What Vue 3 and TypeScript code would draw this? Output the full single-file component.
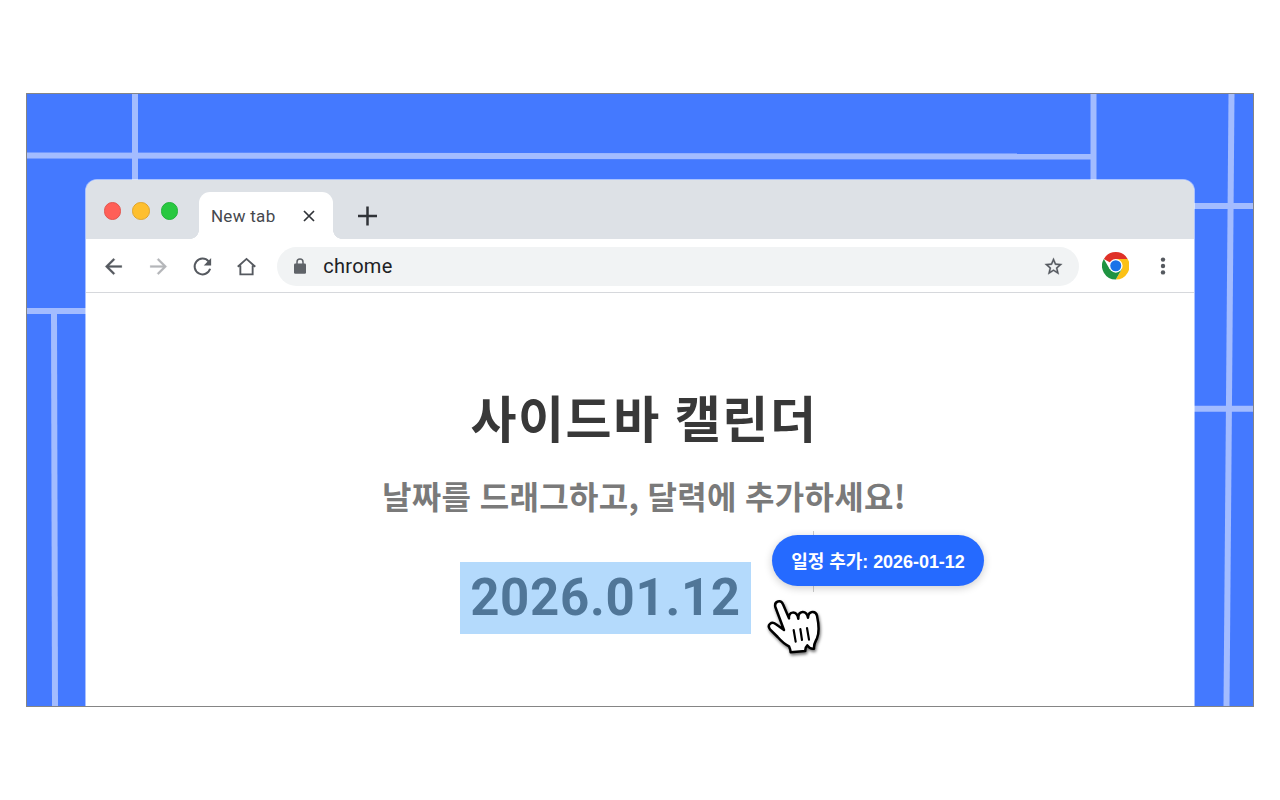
<script setup lang="ts">
const heading = '사이드바 캘린더'
const subheading = '날짜를 드래그하고, 달력에 추가하세요!'
const date = '2026.01.12'
const toast = '일정 추가: 2026-01-12'
const lights = ['red', 'yellow', 'green']
</script>

<template>
  <main class="page">
    <section class="banner">
      <svg class="lines" viewBox="0 0 1226 612" aria-hidden="true">
        <g fill="none" stroke="#a3bcff" stroke-width="6">
          <path d="M0 61.400L1067 62.600" />
          <path d="M108 0V100" />
          <path d="M1066.500 0V100" />
          <path d="M1204.500 0L1199.500 612" />
          <path d="M1160 112H1226" />
          <path d="M1160 314.800H1226" />
          <path d="M0 217H70" />
          <path d="M27 217L28 612" />
        </g>
      </svg>

      <div class="window">
        <header class="tabs">
          <div class="lights">
            <i v-for="c in lights" :key="c" :class="['light', c]"></i>
          </div>
          <div class="tab">
            <span class="tab-title">New tab</span>
            <svg class="close" viewBox="0 0 14 14"><path d="M2 2L12 12M12 2L2 12" stroke="#303338" stroke-width="1.700" /></svg>
          </div>
          <svg class="plus" viewBox="0 0 20 20"><path d="M10.500 .5V19.500M1 10H20" stroke="#303338" stroke-width="2.500" /></svg>
        </header>

        <nav class="toolbar">
          <svg class="ic" viewBox="0 0 24 24"><path fill="#55595f" stroke="#55595f" stroke-width=".2" d="M20 11H7.830l5.590-5.590L12 4l-8 8 8 8 1.410-1.410L7.830 13H20z" /></svg>
          <svg class="ic" viewBox="0 0 24 24"><path fill="#b4b6b9" stroke="#b4b6b9" stroke-width=".2" d="M12 4l-1.410 1.410L16.170 11H4v2h12.170l-5.580 5.590L12 20l8-8z" /></svg>
          <svg class="ic" viewBox="0 0 24 24">
            <path fill="none" stroke="#55595f" stroke-width="1.900" d="M19.300 14.200A7.600 7.600 0 1 1 17.800 7" />
            <path fill="#55595f" d="M20.300 3.900V11H13.200z" />
          </svg>
          <svg class="ic" viewBox="0 0 24 24"><path fill="none" stroke="#55595f" stroke-width="1.800" d="M3.600 12.200L12 4.700l8.400 7.500M6.100 11V19.500H17.900V11" /></svg>
          <div class="address">
            <svg class="lock" viewBox="0 0 12 16">
              <path fill="none" stroke="#5f6368" stroke-width="1.500" d="M3 6V4a3 3 0 0 1 6 0v2" />
              <rect x="0" y="5.500" width="12" height="10.300" rx="1.300" fill="#5f6368" />
            </svg>
            <span class="url">chrome</span>
            <svg class="star" viewBox="0 0 24 24"><path fill="#55595f" stroke="#55595f" stroke-width=".3" d="M22 9.240l-7.190-.62L12 2 9.190 8.630 2 9.240l5.460 4.730L5.820 21 12 17.270 18.180 21l-1.630-7.030zM12 15.400l-3.760 2.270 1-4.280-3.320-2.880 4.380-.38L12 6.100l1.710 4.040 4.380.38-3.320 2.880 1 4.280z" /></svg>
          </div>
          <svg class="chrome" viewBox="0 0 48 48">
            <path fill="#df3127" d="M24 24L3.215 12A24 24 0 0 1 44.785 12z" />
            <path fill="#fbc116" d="M24 24V12H44.785A24 24 0 0 1 24 48L34.392 30z" />
            <path fill="#1f9341" d="M3.215 12A24 24 0 0 0 24 48L34.392 30L24 24L13.608 30z" />
            <circle cx="24" cy="24" r="12" fill="#fff" />
            <circle cx="24" cy="24" r="9.600" fill="#1a73e8" />
          </svg>
          <svg class="dots" viewBox="0 0 6 18">
            <g fill="#55595f"><circle cx="3" cy="2.600" r="2.200" /><circle cx="3" cy="9" r="2.200" /><circle cx="3" cy="15.400" r="2.200" /></g>
          </svg>
        </nav>

        <div class="content">
          <h1>{{ heading }}</h1>
          <p class="sub">{{ subheading }}</p>
          <div class="date-row">
            <span class="date">{{ date }}</span>
            <div class="toast-wrap"><div class="toast">{{ toast }}</div></div>
            <svg class="hand" viewBox="15 219 180 180">
              <path fill="#fff" stroke="#000" stroke-width="7.500" stroke-linejoin="round" d="M46 246C42 228 63 223 69 238L87 280C84 259 110 255 115 281C114 256 139 254 144 278C145 257 167 256 171 272C177 300 179 320 171 340C166 350 161 356 162 371Q150 373 142 361Q135 367 136 378L92 382Q91 373 87 364C72 357 61 345 53 336L30 313C20 300 34 287 48 298L72 315Z" />
              <path fill="none" stroke="#000" stroke-width="6.500" stroke-linecap="round" d="M101 315L107 350M121 312L126 345M141 309L147 344" />
            </svg>
          </div>
        </div>
      </div>
    </section>
  </main>
</template>

<style>
body { margin: 0; background: #fff; }
</style>

<style scoped>
* { box-sizing: border-box; }
.page { width: 1280px; height: 800px; padding: 93px 26px; overflow: hidden; }
.banner { position: relative; width: 1228px; height: 614px; border: 1px solid #858585; background: #4479ff; padding: 85px 58px 0; overflow: hidden; }
.lines { position: absolute; left: 0; top: 0; width: 1226px; height: 612px; }
.window { position: relative; width: 1110px; height: 528px; background: #fff; background-clip: padding-box; border: 1px solid rgba(255, 255, 255, .55); border-bottom: 0; border-radius: 12px 12px 0 0; }
.tabs { height: 59px; display: flex; background: #dde1e6; border-radius: 11px 11px 0 0; }
.lights { display: flex; gap: 11px; padding: 22px 0 0 17.700px; width: 113.400px; }
.light { width: 17.500px; height: 17.500px; border-radius: 50%; flex: none; }
.red { background: #ff5f57; border: 1px solid #e2544d; }
.yellow { background: #febf2e; border: 1px solid #e0a52c; }
.green { background: #28c840; border: 1px solid #22b33a; }
.tab { position: relative; width: 134px; margin-top: 12px; border-radius: 11px 11px 0 0; background: #fff; display: flex; align-items: center; padding: 1px 0 0 11.500px; }
.tab::before, .tab::after { content: ''; position: absolute; bottom: 0; width: 9px; height: 9px; }
.tab::before { left: -9px; background: radial-gradient(circle at 0 0, transparent 8.600px, #fff 9.200px); }
.tab::after { right: -9px; background: radial-gradient(circle at 100% 0, transparent 8.600px, #fff 9.200px); }
.tab-title { font: 400 17px/24px Roboto, sans-serif; letter-spacing: 0.3px; color: #45484d; width: 91.500px; white-space: nowrap; }
.close { width: 14px; height: 14px; }
.plus { width: 20px; height: 20px; margin: 26px 0 0 24px; }
.toolbar { height: 54px; border-bottom: 1px solid #d6d8dc; display: flex; align-items: center; padding: 1px 0 0 15.300px; }
.ic { width: 25px; height: 25px; margin-right: 19.300px; flex: none; }
.address { width: 802px; height: 39px; margin-left: -1.600px; border-radius: 20px; background: #f1f3f4; display: flex; align-items: center; padding: 0 15px 0 17.500px; flex: none; }
.lock { width: 12px; height: 16px; }
.url { flex: 1; margin-left: 16.800px; font: 400 20px/28px Roboto, sans-serif; letter-spacing: 0.3px; color: #202124; }
.star { width: 21px; height: 21px; }
.chrome { width: 27.500px; height: 27.500px; margin-left: 23px; }
.dots { width: 6px; height: 18px; margin-left: 30.500px; }
.content { display: flex; flex-direction: column; align-items: center; }
h1 { margin: 88px 0 0 8px; font: 700 50px/70px "Noto Sans CJK KR", sans-serif; letter-spacing: 1.6px; word-spacing: 1px; color: #383838; white-space: nowrap; }
.sub { margin: 21px 0 0 8px; font: 700 32px/46px "Noto Sans CJK KR", sans-serif; letter-spacing: 0.3px; word-spacing: 0.8px; color: #7a7a7a; white-space: nowrap; }
.date-row { position: relative; align-self: stretch; margin-top: 44px; padding-left: 374px; display: flex; }
.date { width: 291px; height: 72px; text-align: center; background: #b4dafc; color: #507698; font: 700 51px/72px Roboto, sans-serif; letter-spacing: 0.7px; white-space: nowrap; }
.toast-wrap { position: absolute; left: 686px; top: -31px; width: 212px; height: 61px; padding-top: 4px; background: linear-gradient(#ccc, #ccc) 41px 0 / 1px 100% no-repeat; }
.toast { height: 51px; border-radius: 26px; background: #256aff; color: #fff; text-align: center; box-shadow: 0 2px 8px rgba(0, 0, 0, .2); font: 700 18px/54px "Liberation Sans", "Noto Sans CJK KR", sans-serif; letter-spacing: -0.05px; white-space: nowrap; }
.hand { position: absolute; left: 679px; top: 36px; width: 60px; height: 60px; filter: drop-shadow(1px 2px 1.500px rgba(0, 0, 0, .55)); }
</style>
